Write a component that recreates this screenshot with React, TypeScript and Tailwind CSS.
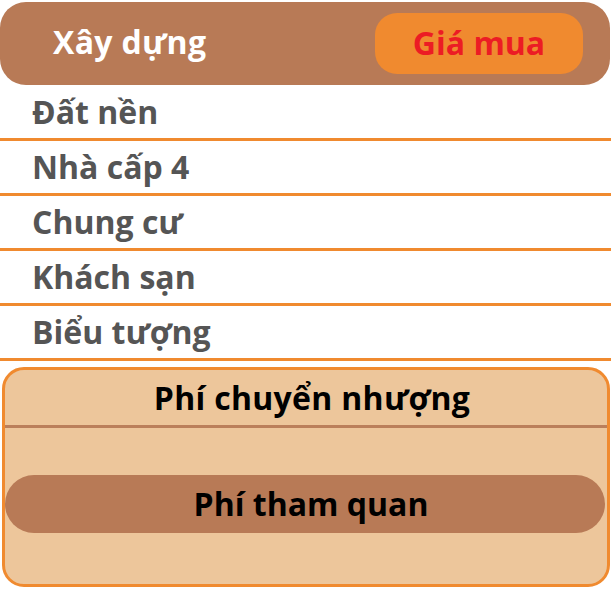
const items = ["Đất nền", "Nhà cấp 4", "Chung cư", "Khách sạn", "Biểu tượng"];

export default function App() {
  return (
    <div
      className="w-[611px] h-[590px] overflow-hidden bg-white pt-[2px]"
      style={{ fontFamily: '"Open Sans", "Noto Sans", sans-serif' }}
    >
      <div className="mr-px h-[83px] rounded-[26px] bg-[#b87a56] flex items-center justify-between pl-[53px] pr-[27px]">
        <span className="mb-[4px] text-[32px] font-bold text-white tracking-[0.3px]">Xây dựng</span>
        <div className="w-[208px] h-[61px] rounded-[22px] bg-[#f08a2f] flex items-center justify-center pb-[2px]">
          <span className="text-[32px] font-bold text-[#ec1c24]">Giá mua</span>
        </div>
      </div>

      <div className="flex flex-col">
        {items.map((label, i) => (
          <div
            key={label}
            className={`${i === 0 ? "h-[56px]" : "h-[55px]"} border-b-[3px] border-[#f08a2f] flex items-center pl-8`}
          >
            <span className="text-[32px] font-bold text-[#555555]">{label}</span>
          </div>
        ))}
      </div>

      <div className="mt-[6px] ml-[2px] mr-px h-[220px] rounded-[22px] border-[3px] border-[#f08a2f] bg-[#edc69b] overflow-hidden flex flex-col">
        <div className="h-[55px] flex items-center justify-center pl-3">
          <span className="text-[32px] font-bold text-black tracking-[0.3px]">Phí chuyển nhượng</span>
        </div>
        <div className="h-[3px] bg-[#bb7f5b]" />
        <div className="mt-[47px] mr-[2px] h-[58px] rounded-full bg-[#b87a56] flex items-center justify-center pl-3">
          <span className="text-[32px] font-bold text-black">Phí tham quan</span>
        </div>
      </div>
    </div>
  );
}
